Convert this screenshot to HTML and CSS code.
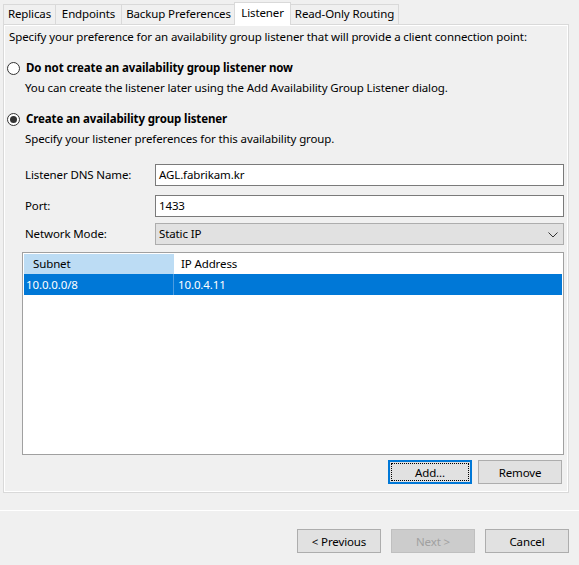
FILE: index.html
```html
<!DOCTYPE html>
<html>
<head>
<meta charset="utf-8">
<link rel="stylesheet" href="styles.css">
</head>
<body>
<div class="tabs">
  <div class="tab t1">Replicas</div>
  <div class="tab t2">Endpoints</div>
  <div class="tab t3">Backup Preferences</div>
  <div class="tab t4 selected">Listener</div>
  <div class="tab t5">Read-Only Routing</div>
</div>
<div class="panel">
  <div class="content">
    <div class="intro">Specify your preference for an availability group listener that will provide a client connection point:</div>
    <div class="radio-row first">
      <span class="radio"></span>
      <span class="radio-label">Do not create an availability group listener now</span>
    </div>
    <div class="sub">You can create the listener later using the Add Availability Group Listener dialog.</div>
    <div class="radio-row second">
      <span class="radio checked"></span>
      <span class="radio-label">Create an availability group listener</span>
    </div>
    <div class="sub">Specify your listener preferences for this availability group.</div>
    <div class="form">
      <div class="field">
        <span class="label">Listener DNS Name:</span>
        <div class="input">AGL.fabrikam.kr</div>
      </div>
      <div class="field port">
        <span class="label">Port:</span>
        <div class="input">1433</div>
      </div>
      <div class="field mode">
        <span class="label">Network Mode:</span>
        <div class="combo">
          <span>Static IP</span>
          <svg class="chev" width="10" height="6" viewBox="0 0 10 6"><path d="M0.5 0.5 L5 5 L9.5 0.5" fill="none" stroke="#333" stroke-width="1"/></svg>
        </div>
      </div>
    </div>
    <div class="list">
      <div class="list-head">
        <div class="col c1 hot">Subnet</div>
        <div class="col c2">IP Address</div>
      </div>
      <div class="list-row selected-row">
        <div class="cell c1">10.0.0.0/8</div>
        <div class="cell c2">10.0.4.11</div>
      </div>
    </div>
    <div class="list-buttons">
      <button class="btn focused"><span class="focus-ring">Add...</span></button>
      <button class="btn">Remove</button>
    </div>
  </div>
</div>
<div class="footer">
  <button class="btn">&lt; Previous</button>
  <button class="btn disabled">Next &gt;</button>
  <button class="btn">Cancel</button>
</div>
</body>
</html>
```
FILE: styles.css
```css
* { box-sizing: border-box; }
body {
  margin: 0;
  width: 579px;
  height: 565px;
  overflow: hidden;
  background: #f0f0f0;
  font-family: "Noto Sans", "Liberation Sans", sans-serif;
  font-size: 11.5px;
  letter-spacing: -0.12px;
  color: #000;
}
.tabs {
  display: flex;
  align-items: flex-end;
  height: 24px;
  padding-left: 3px;
  position: relative;
  z-index: 1;
}
.tab {
  height: 20px;
  border: 1px solid #d9d9d9;
  border-bottom: none;
  margin-right: -1px;
  display: flex;
  align-items: center;
  justify-content: center;
  background: #f0f0f0;
  line-height: 16px;
  padding-bottom: 1px;
}
.t1 { width: 53px; }
.t2 { width: 67px; }
.t3 { width: 115px; }
.t4 { width: 57px; margin-left: -1px; }
.t5 { width: 109px; }
.tab.selected {
  height: 23px;
  margin-bottom: -1px;
  background: #ffffff;
  padding-bottom: 3px;
  position: relative;
  z-index: 2;
}
.panel {
  margin-left: 3px;
  width: 566px;
  height: 469px;
  border: 1px solid #d9d9d9;
  background: #ffffff;
  padding: 1px;
}
.content {
  height: 100%;
  background: #f0f0f0;
  padding: 3px 3px 0 0;
  display: flex;
  flex-direction: column;
}
.intro {
  padding-left: 4px;
  line-height: 16px;
  white-space: nowrap;
}
.radio-row {
  display: flex;
  align-items: center;
  height: 16px;
  padding-left: 2px;
  gap: 6px;
}
.radio-row.first { margin-top: 15px; }
.radio-row.second { margin-top: 15px; }
.radio {
  width: 13px;
  height: 13px;
  border: 1px solid #333;
  border-radius: 50%;
  background: #fff;
  display: flex;
  align-items: center;
  justify-content: center;
}
.radio.checked::after {
  content: "";
  width: 7px;
  height: 7px;
  border-radius: 50%;
  background: #333;
}
.radio-label {
  font-weight: bold;
  line-height: 16px;
  white-space: nowrap;
}
.sub {
  padding-left: 20px;
  line-height: 16px;
  margin-top: 4px;
  white-space: nowrap;
}
.form {
  margin-top: 17px;
  padding-left: 20px;
  display: flex;
  flex-direction: column;
}
.field {
  display: grid;
  grid-template-columns: 130px 1fr;
  align-items: center;
  height: 22px;
}
.field.port { margin-top: 9px; }
.field.mode { margin-top: 6px; }
.label { line-height: 16px; }
.input {
  height: 22px;
  border: 1px solid #7a7a7a;
  background: #fff;
  padding: 0 3px;
  line-height: 20px;
}
.combo {
  height: 22px;
  border: 1px solid #adadad;
  background: #e1e1e1;
  padding: 0 5px 0 3px;
  line-height: 20px;
  display: flex;
  align-items: center;
  justify-content: space-between;
}
.chev { margin-top: 1px; }
.list {
  margin-top: 7px;
  margin-left: 17px;
  height: 203px;
  border: 1px solid #a0a0a0;
  background: #fff;
  padding: 1px 1px 0 1px;
}
.list-head, .list-row {
  display: flex;
}
.list-head { height: 20px; }
.col {
  line-height: 20px;
  border-right: 1px solid #e5e5e5;
}
.col.c1 { width: 150px; padding-left: 9px; }
.col.c2 { flex: 1; padding-left: 7px; border-right: none; }
.col.hot { background: #bcdcf4; border-right-color: #bcdcf4; }
.list-row { height: 21px; }
.selected-row { background: #0078d7; color: #fff; }
.cell { line-height: 21px; }
.cell.c1 { width: 150px; padding-left: 2px; border-right: 1px solid #4c9ce0; }
.cell.c2 { flex: 1; padding-left: 4px; }
.list-buttons {
  display: flex;
  justify-content: flex-end;
  gap: 6px;
  margin-top: 5px;
  padding-right: 2px;
}
.btn {
  width: 84px;
  height: 24px;
  border: 1px solid #adadad;
  background: #e1e1e1;
  font-family: inherit;
  font-size: 11.5px;
  letter-spacing: -0.12px;
  color: #000;
  padding: 0;
  margin: 0;
  display: flex;
  align-items: center;
  justify-content: center;
}
.btn.focused {
  border: 2px solid #0078d7;
  padding: 1px;
}
.focus-ring {
  display: flex;
  align-items: center;
  justify-content: center;
  width: 100%;
  height: 100%;
  border: 1px dotted #000;
}
.btn.disabled {
  background: #cccccc;
  border-color: #bfbfbf;
  color: #a0a0a0;
}
.footer {
  margin-top: 17px;
  border-top: 1px solid #ffffff;
  padding-top: 18px;
  padding-right: 10px;
  display: flex;
  justify-content: flex-end;
  gap: 10px;
}
```
